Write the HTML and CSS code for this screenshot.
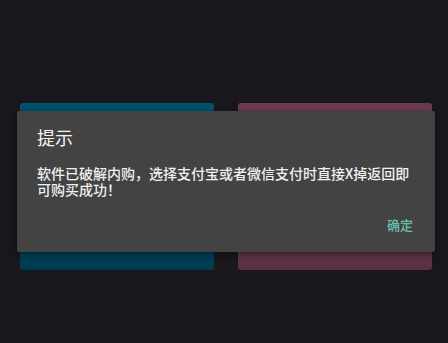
FILE: index.html
```html
<!DOCTYPE html>
<html lang="zh">
<head>
<meta charset="utf-8">
<link rel="stylesheet" href="styles.css">
</head>
<body>
<div class="screen">
  <div class="cards">
    <div class="card card-blue"></div>
    <div class="card card-rose"></div>
  </div>
  <div class="dialog">
    <div class="dialog-title">提示</div>
    <div class="dialog-message">软件已破解内购，选择支付宝或者微信支付时直接X掉返回即可购买成功！</div>
    <div class="dialog-actions">
      <span class="dialog-button">确定</span>
    </div>
  </div>
</div>
</body>
</html>
```
FILE: styles.css
```css
html, body {
  margin: 0;
  padding: 0;
  background: #18171c;
}
body {
  width: 448px;
  height: 343px;
  overflow: hidden;
  font-family: "Noto Sans CJK SC", "Noto Sans", sans-serif;
}
.screen {
  position: relative;
  width: 448px;
  height: 343px;
}
.cards {
  display: flex;
  gap: 24px;
  padding: 103px 16px 0 20px;
}
.card {
  width: 194px;
  height: 167px;
  border-radius: 3px;
}
.card-blue {
  background: linear-gradient(#00526c, #003b52);
}
.card-rose {
  background: linear-gradient(#6b3c50, #583242);
}
.dialog {
  position: absolute;
  left: 17px;
  top: 111px;
  width: 418px;
  height: 141px;
  box-sizing: border-box;
  background: #434343;
  border-radius: 2px;
  padding: 14px 20px 0 20px;
  box-shadow: 0 2px 6px rgba(0,0,0,0.4);
}
.dialog-title {
  color: #f4f4f4;
  font-size: 18px;
  line-height: 25px;
}
.dialog-message {
  margin-top: 15px;
  color: #f0f0f0;
  font-size: 14px;
  font-weight: 500;
  line-height: 16px;
  width: 378px;
}
.dialog-actions {
  display: flex;
  justify-content: flex-end;
  margin-top: 19px;
  padding-right: 2px;
}
.dialog-button {
  color: #6cc0b0;
  font-size: 13px;
  font-weight: 500;
  line-height: 18px;
}
```
